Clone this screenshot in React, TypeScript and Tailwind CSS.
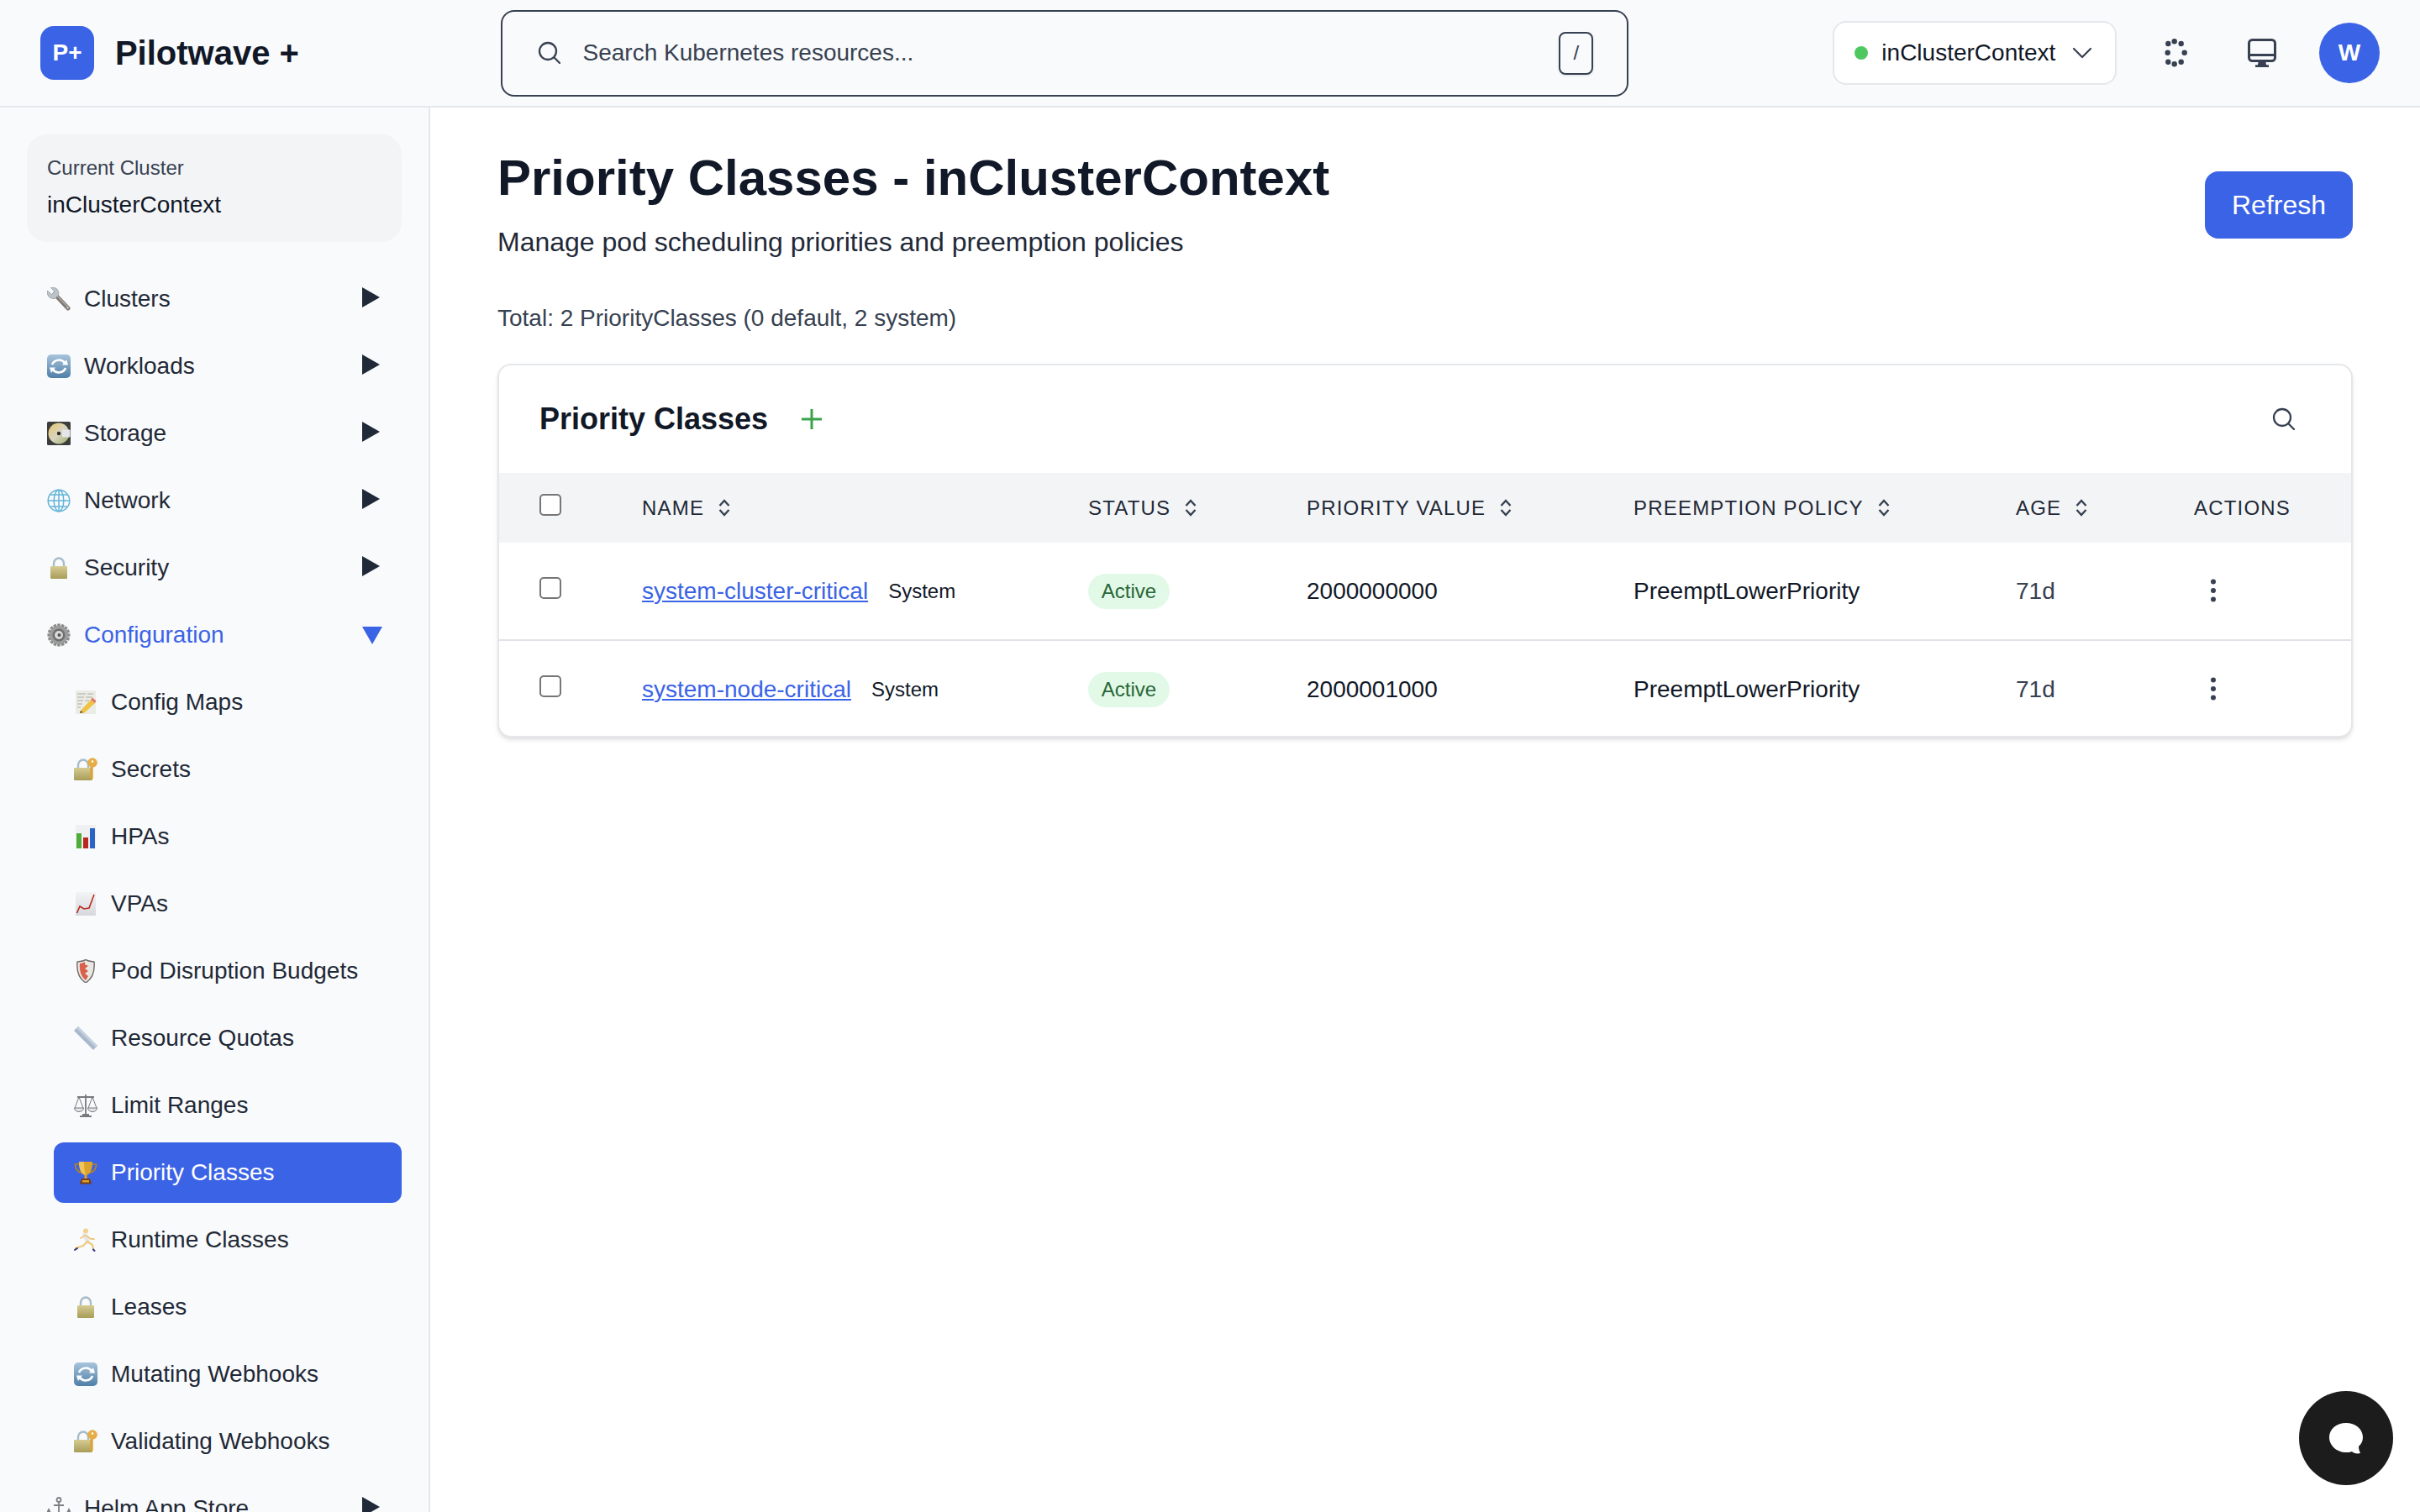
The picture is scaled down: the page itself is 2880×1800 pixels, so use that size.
import React from 'react';
import { MoreVertical } from 'lucide-react';

const Wrench = () => (
  <svg viewBox="0 0 28 28" className="w-full h-full">
    <path d="M25 25 L9 8" stroke="#7d7772" strokeWidth="5" strokeLinecap="round" />
    <path d="M25.500 24.500 L12 10" stroke="#b0aaa4" strokeWidth="1.500" />
    <path d="M0.500 4 L5.500 8.500 L9 5.500 L4.500 0.500 A7 7 0 0 1 13.500 9.500 L9.500 13.500 A7.500 7.500 0 0 1 0.500 4Z" fill="#bcc3c9" stroke="#8b9299" strokeWidth="0.6" />
    <circle cx="24.500" cy="24.500" r="1" fill="#e8e6e3" />
  </svg>
);
const Refresh = () => (
  <svg viewBox="0 0 28 28" className="w-full h-full">
    <defs>
      <linearGradient id="rf" x1="0" y1="0" x2="0" y2="1">
        <stop offset="0" stopColor="#a9c4dc" />
        <stop offset="1" stopColor="#4f7fa8" />
      </linearGradient>
    </defs>
    <rect x="0" y="0" width="28" height="28" rx="5" fill="url(#rf)" />
    <path d="M6 12 A8.5 8 0 0 1 21 10" fill="none" stroke="#fff" strokeWidth="2.6" />
    <path d="M18 12.5 L25 12.5 L23 6 Z" fill="#fff" />
    <path d="M22 16 A8.5 8 0 0 1 7 18" fill="none" stroke="#fff" strokeWidth="2.6" />
    <path d="M10 15.5 L3 15.5 L5 22 Z" fill="#fff" />
  </svg>
);
const Disc = () => (
  <svg viewBox="0 0 28 28" className="w-full h-full">
    <defs>
      <linearGradient id="dc" x1="0" y1="0" x2="1" y2="1">
        <stop offset="0" stopColor="#e8c766" />
        <stop offset="0.5" stopColor="#d9d4c0" />
        <stop offset="1" stopColor="#9bb06a" />
      </linearGradient>
    </defs>
    <rect width="28" height="28" rx="1.5" fill="#3d3d3b" />
    <circle cx="14" cy="14" r="12.5" fill="url(#dc)" />
    <rect x="18" y="9.5" width="9.5" height="9" rx="1" fill="#e4e6e8" />
    <circle cx="14" cy="14" r="2.2" fill="#2c2c2c" />
  </svg>
);
const Globe = () => (
  <svg viewBox="0 0 28 28" className="w-full h-full" fill="none" stroke="#62b4d8" strokeWidth="1.5">
    <circle cx="14" cy="14" r="12.8" />
    <ellipse cx="14" cy="14" rx="5.8" ry="12.8" />
    <path d="M14 1V27M1.5 14H26.5M3.5 7H24.500M3.5 21H24.5" />
  </svg>
);
const LockBody = ({ x = 4, w = 20 }: { x?: number; w?: number }) => (
  <>
    <defs>
      <linearGradient id="lk" x1="0" y1="0" x2="0" y2="1">
        <stop offset="0" stopColor="#d6cc92" />
        <stop offset="1" stopColor="#a89c58" />
      </linearGradient>
    </defs>
    <rect x={x} y="12" width={w} height="15" rx="1.2" fill="url(#lk)" />
  </>
);
const Lock = () => (
  <svg viewBox="0 0 28 28" className="w-full h-full">
    <path d="M8 13V9A6 6.500 0 0 1 20 9V13" fill="none" stroke="#a9bccb" strokeWidth="2.4" />
    <LockBody />
  </svg>
);
const LockKey = () => (
  <svg viewBox="0 0 28 28" className="w-full h-full">
    <path d="M5 13V9A6 6.500 0 0 1 17 9V13" fill="none" stroke="#a9bccb" strokeWidth="2.4" />
    <LockBody x={0} w={22} />
    <path d="M21 8V25" stroke="#dca23c" strokeWidth="3.4" />
    <circle cx="22" cy="6" r="5.800" fill="#e5ad45" />
    <circle cx="22" cy="4.500" r="1.500" fill="#fbeec9" />
  </svg>
);
const Gear = () => (
  <svg viewBox="0 0 28 28" className="w-full h-full">
    <g stroke="#8a8a8a" strokeWidth="3.6">
      <path d="M14 0.500V27.500M0.500 14H27.500M4.500 4.500L23.500 23.500M23.500 4.500L4.500 23.500M8.800 1.500L19.200 26.500M19.200 1.500L8.800 26.500M1.500 8.800L26.500 19.200M1.500 19.200L26.500 8.800" />
    </g>
    <circle cx="14" cy="14" r="11" fill="#9c9c9c" />
    <circle cx="14" cy="14" r="7.500" fill="#6e6e6e" />
    <circle cx="14" cy="14" r="5" fill="#d8d8d8" />
    <circle cx="14.500" cy="14" r="2" fill="#555" />
  </svg>
);
const Memo = () => (
  <svg viewBox="0 0 28 28" className="w-full h-full">
    <rect x="2" y="0" width="24" height="28" fill="#ecece6" />
    <path d="M4 4H14M16 4H23M4 8H12M14 8H22M4 12H11M13 12H18M4 16H10M4 20H8" stroke="#a5a59c" strokeWidth="0.9" />
    <path d="M8 24 L20 11 L25 15 L12 27 L7 27 Z" fill="#f0c243" />
    <path d="M20 11 L22 8.500 L26.500 12.500 L25 15Z" fill="#e0766c" />
    <path d="M7 27 L8 24 L10.500 26Z" fill="#444" />
  </svg>
);
const Bars = () => (
  <svg viewBox="0 0 28 28" className="w-full h-full">
    <rect x="2" y="0" width="24" height="28" fill="#eef0f2" />
    <rect x="3" y="10" width="6" height="18" fill="#4ead3a" />
    <rect x="11" y="15" width="6" height="13" fill="#b8281e" />
    <rect x="19" y="4" width="6" height="24" fill="#2b63c6" />
  </svg>
);
const Line = () => (
  <svg viewBox="0 0 28 28" className="w-full h-full">
    <defs>
      <linearGradient id="ln" x1="0" y1="0" x2="0" y2="1">
        <stop offset="0" stopColor="#f3f4f5" />
        <stop offset="1" stopColor="#d5d8dc" />
      </linearGradient>
    </defs>
    <rect x="2" y="0" width="24" height="28" fill="url(#ln)" />
    <path d="M3.500 25 L7 17 L12 20 L18 19 L24 3" fill="none" stroke="#bb2a1e" strokeWidth="1.600" />
  </svg>
);
const Shield = () => (
  <svg viewBox="0 0 28 28" className="w-full h-full">
    <path d="M14 0.500 C18 2.500 21 2.500 24 3 C25 14 22 23 14 28 C6 23 3 14 4 3 C7 2.500 10 2.500 14 0.500Z" fill="#e9e7e4" stroke="#6e6a66" strokeWidth="1.400" />
    <path d="M7 5 C9 5 11 4 13 3 L13 6 L17 8 L13 11 L17 14 L13 17 L17 20 L14 25 C9 21 6 14 7 5Z" fill="#d9604a" />
  </svg>
);
const Ruler = () => (
  <svg viewBox="0 0 28 28" className="w-full h-full">
    <path d="M5 0 L28 23 L23 28 L0 5 Z" fill="#a9b9cd" />
    <path d="M5 0 L28 23 L26 25 L3 2 Z" fill="#c4d0de" />
  </svg>
);
const Scales = () => (
  <svg viewBox="0 0 28 28" className="w-full h-full" fill="none" stroke="#77797c" strokeWidth="1">
    <path d="M14 1V25M4 4H24M7 27H21M10 25H18" strokeWidth="1.800" />
    <path d="M6 4L1 17M6 4L11 17M22 4L17 17M22 4L27 17" />
    <path d="M0.500 17A5.500 4.500 0 0 0 11.500 17ZM16.500 17A5.500 4.500 0 0 0 27.500 17Z" fill="#e3e5e8" />
  </svg>
);
const Trophy = () => (
  <svg viewBox="0 0 28 28" className="w-full h-full">
    <path d="M7 4H1.500C1.500 10 4 13 9 14M21 4H26.500C26.500 10 24 13 19 14" fill="none" stroke="#b9821f" strokeWidth="1.700" />
    <path d="M6 1H22C22 10 20 15 15.500 17V21H12.500V17C8 15 6 10 6 1Z" fill="#dca32c" />
    <path d="M6 1H12C12 9 13 14 14 17C9 15 6 10 6 1Z" fill="#f0c65a" />
    <path d="M9 21H19L21 27.500H7Z" fill="#7c3c12" />
    <rect x="10" y="23" width="8" height="2.500" fill="#dca32c" />
  </svg>
);
const Runner = () => (
  <svg viewBox="0 0 28 28" className="w-full h-full" fill="none" strokeLinecap="round" strokeLinejoin="round">
    <circle cx="14" cy="3.500" r="3" fill="#f3d18b" />
    <path d="M13 8 L16 15" stroke="#e3e5ea" strokeWidth="5" />
    <path d="M13 9 L8 12 M15 9 L20 13 L24 13" stroke="#f0c87e" strokeWidth="1.800" />
    <path d="M16 16 L11 21 L2 24" stroke="#f0c87e" strokeWidth="2.200" />
    <path d="M16 16 L22 20 L23 25" stroke="#f0c87e" strokeWidth="2.200" />
    <path d="M1 26 L4 24" stroke="#2b3a7a" strokeWidth="2" />
    <path d="M23 25.500 L24.500 27" stroke="#2b3a7a" strokeWidth="2" />
  </svg>
);
const Anchor = () => (
  <svg viewBox="0 0 28 28" className="w-full h-full" fill="none" stroke="#7b8087" strokeWidth="1.800">
    <circle cx="14" cy="3.500" r="2.500" />
    <path d="M14 6V27M8 10H20M2 17C2 23 8 26 14 27C20 26 26 23 26 17" />
    <path d="M0 19L2 15L4 19M24 19L26 15L28 19" />
  </svg>
);

const Sort = () => (
  <svg viewBox="0 0 14 21" className="w-[14px] h-[21px] ml-[17px]" fill="none" stroke="#374151" strokeWidth="2.400">
    <path d="M1.500 8L7 2L12.500 8M1.500 13L7 19L12.500 13" />
  </svg>
);

const TriRight = () => (
  <svg viewBox="0 0 21 24" className="w-[21px] h-6 mb-1">
    <path d="M0 0L21 12L0 24Z" fill="#1f2937" />
  </svg>
);
const TriDown = () => (
  <svg viewBox="0 0 24 21" className="w-6 h-[21px] mr-[-3px]">
    <path d="M0 0H24L12 21Z" fill="#3b63e6" />
  </svg>
);

const Mag = ({ className }: { className: string }) => (
  <svg viewBox="0 0 24 24" className={className} fill="none" stroke="#374151" strokeWidth="1.700" strokeLinecap="round" strokeLinejoin="round">
    <path d="m21 21-5.197-5.197m0 0A7.5 7.5 0 1 0 5.196 5.196a7.5 7.5 0 0 0 10.607 10.607Z" />
  </svg>
);

const spinnerDots: [number, number][] = [
  [13.7, 4.3],
  [21.7, 7],
  [25.7, 17.7],
  [21.7, 28.7],
  [13.7, 31.3],
  [6.3, 28.7],
  [5.7, 17.7],
  [6.3, 7],
];

const Spinner = () => (
  <svg viewBox="0 0 32 36" className="w-8 h-9">
    {spinnerDots.map(([x, y]) => (
      <circle key={`${x}-${y}`} cx={x} cy={y} r="3.2" fill="#374151" />
    ))}
  </svg>
);

const Monitor = () => (
  <svg viewBox="0 0 34 34" className="w-[34px] h-[34px]" fill="none" stroke="#374151" strokeWidth="3">
    <rect x="1.500" y="1.500" width="31" height="25" rx="4" />
    <path d="M2 19.500H32" />
    <path d="M13.500 27H20.500L21.500 32.500H12.500Z" fill="#374151" strokeWidth="1.500" />
    <path d="M9 32.800H25" />
  </svg>
);

type Item = { icon: React.FC; label: string; sub?: boolean; active?: boolean; open?: boolean };

const items: Item[] = [
  { icon: Wrench, label: 'Clusters' },
  { icon: Refresh, label: 'Workloads' },
  { icon: Disc, label: 'Storage' },
  { icon: Globe, label: 'Network' },
  { icon: Lock, label: 'Security' },
  { icon: Gear, label: 'Configuration', open: true },
  { icon: Memo, label: 'Config Maps', sub: true },
  { icon: LockKey, label: 'Secrets', sub: true },
  { icon: Bars, label: 'HPAs', sub: true },
  { icon: Line, label: 'VPAs', sub: true },
  { icon: Shield, label: 'Pod Disruption Budgets', sub: true },
  { icon: Ruler, label: 'Resource Quotas', sub: true },
  { icon: Scales, label: 'Limit Ranges', sub: true },
  { icon: Trophy, label: 'Priority Classes', sub: true, active: true },
  { icon: Runner, label: 'Runtime Classes', sub: true },
  { icon: Lock, label: 'Leases', sub: true },
  { icon: Refresh, label: 'Mutating Webhooks', sub: true },
  { icon: LockKey, label: 'Validating Webhooks', sub: true },
  { icon: Anchor, label: 'Helm App Store' },
];

const NavRow = ({ item }: { item: Item }) => {
  const Icon = item.icon;
  return (
    <div
      className={`flex items-center h-[72px] mb-2 shrink-0 rounded-xl pl-6 pr-[26px] text-[28px] ${item.sub ? 'ml-8' : ''} ${
        item.active ? 'bg-[#3b63e6] text-white' : item.open ? 'text-[#3b63e6]' : 'text-[#1f2937]'
      }`}
    >
      <span className="w-7 h-7 mr-4 shrink-0">
        <Icon />
      </span>
      <span className="flex-1">{item.label}</span>
      {!item.sub && (item.open ? <TriDown /> : <TriRight />)}
    </div>
  );
};

const cols = 'grid grid-cols-[170px_531px_260px_389px_455px_212px_1fr] items-center';

const Check = () => (
  <span className="block w-[26px] h-[26px] ml-12 mb-2 rounded-[5px] border-2 border-[#767676] bg-white" />
);

const headers: [string, boolean][] = [
  ['NAME', true],
  ['STATUS', true],
  ['PRIORITY VALUE', true],
  ['PREEMPTION POLICY', true],
  ['AGE', true],
  ['ACTIONS', false],
];

const rows = [
  { name: 'system-cluster-critical', value: '2000000000' },
  { name: 'system-node-critical', value: '2000001000' },
];

export default function App() {
  return (
    <div className="h-[1800px] w-[2880px] overflow-hidden flex flex-col bg-white font-['Liberation_Sans',Arial,sans-serif] text-[#111827]">
      <header className="h-[128px] shrink-0 flex items-center bg-[#f9fafb] border-b-2 border-[#e5e7eb] pl-12 pr-12">
        <div className="w-16 h-16 rounded-2xl bg-[#3b63e6] text-white font-bold text-[28px] flex items-center justify-center">P+</div>
        <div className="ml-[25px] text-[40px] font-bold w-[459px]">Pilotwave +</div>
        <div className="h-[103px] w-[1344px] rounded-2xl border-2 border-[#374151] flex items-center pl-10 pr-10 text-[28px] text-[#374151]">
          <Mag className="w-8 h-8 mr-6" />
          <span className="flex-1">Search Kubernetes resources...</span>
          <span className="w-[41px] h-[51px] rounded-lg border-2 border-[#374151] flex items-center justify-center text-[24px] shadow-sm">/</span>
        </div>
        <div className="ml-[243px] w-[338px] h-[76px] rounded-2xl border-2 border-[#e5e7eb] bg-white flex items-center pl-6 text-[28px] text-[#111827]">
          <span className="w-4 h-4 rounded-full bg-[#4fc860] mr-4" />
          <span>inClusterContext</span>
          <svg viewBox="0 0 24 24" className="w-8 h-8 ml-4" fill="none" stroke="#374151" strokeWidth="1.700" strokeLinecap="round" strokeLinejoin="round">
            <path d="m19.500 8.250-7.500 7.500-7.500-7.500" />
          </svg>
        </div>
        <div className="ml-[55px] flex items-center justify-center w-8">
          <Spinner />
        </div>
        <div className="ml-[69px] flex items-center justify-center w-[34px]">
          <Monitor />
        </div>
        <div className="ml-[51px] w-[72px] h-[72px] rounded-full bg-[#3b63e6] text-white font-bold text-[28px] flex items-center justify-center">W</div>
      </header>
      <div className="flex flex-1 min-h-0">
        <aside className="w-[512px] shrink-0 border-r-2 border-[#e5e7eb] bg-[#f9fafb] pt-8 pl-8 pr-8 overflow-hidden flex flex-col">
          <div className="h-[128px] shrink-0 rounded-3xl bg-[#f3f4f6] pl-6 pt-6 mb-8">
            <div className="text-[24px] leading-8 text-[#374151]">Current Cluster</div>
            <div className="text-[28px] leading-8 mt-3 text-[#111827]">inClusterContext</div>
          </div>
          {items.map((it) => (
            <NavRow key={it.label} item={it} />
          ))}
        </aside>
        <main className="flex-1 pl-20 pr-20 pt-8">
          <div className="flex justify-between">
            <div>
              <h1 className="text-[60px] leading-[72px] font-bold mt-4">Priority Classes - inClusterContext</h1>
              <p className="text-[32px] leading-[48px] mt-4 text-[#1f2937]">Manage pod scheduling priorities and preemption policies</p>
            </div>
            <button className="w-[176px] h-[80px] mt-[44px] rounded-2xl bg-[#3b63e6] text-white text-[32px]">Refresh</button>
          </div>
          <div className="text-[28px] leading-10 mt-[47px] text-[#374151]">Total: 2 PriorityClasses (0 default, 2 system)</div>
          <div className="mt-[34px] rounded-2xl border-2 border-[#e5e7eb] shadow-md bg-white overflow-hidden">
            <div className="h-[128px] flex items-center pl-12 pr-16">
              <h2 className="text-[36px] font-bold">Priority Classes</h2>
              <svg viewBox="0 0 24 24" className="w-6 h-6 ml-10" fill="none" stroke="#3aa24b" strokeWidth="3">
                <path d="M12 0V24M0 12H24" />
              </svg>
              <Mag className="w-8 h-8 ml-auto" />
            </div>
            <div className={`${cols} h-[83px] bg-[#f3f4f6] text-[24px] tracking-[1.2px] text-[#1f2937]`}>
              <Check />
              {headers.map(([h, s]) => (
                <div key={h} className="flex items-center">
                  <span>{h}</span>
                  {s && <Sort />}
                </div>
              ))}
            </div>
            {rows.map((r, i) => (
              <div key={r.name} className={`${cols} text-[28px] ${i === 0 ? 'h-[117px] border-b-2 border-[#e1e3e8]' : 'h-[113px] pt-[2px]'}`}>
                <Check />
                <div className="flex items-center">
                  <a className="text-[#3b63e6] underline">{r.name}</a>
                  <span className="ml-6 text-[24px] text-[#111827]">System</span>
                </div>
                <div>
                  <span className="inline-flex h-[42px] w-[97px] items-center justify-center rounded-full bg-[#e3f9e8] text-[24px] text-[#276738]">Active</span>
                </div>
                <div className="text-[#111827]">{r.value}</div>
                <div className="text-[#111827]">PreemptLowerPriority</div>
                <div className="text-[#374151]">71d</div>
                <div className="pl-[5px] mb-[2px]">
                  <MoreVertical className="w-9 h-9 text-[#374151]" strokeWidth={2} />
                </div>
              </div>
            ))}
          </div>
        </main>
      </div>
      <div className="fixed right-8 bottom-8 w-[112px] h-[112px] rounded-full bg-[#1c1c1c] flex items-center justify-center">
        <svg viewBox="0 0 40 37" className="w-10 h-[37px]">
          <path d="M20 0C31 0 40 7 40 17C40 22 38 25 35 28C35 31 36 34 37 36C33 37 29 36 27 34C25 35 22 35 20 35C9 35 0 27 0 17C0 7 9 0 20 0Z" fill="#fff" />
        </svg>
      </div>
    </div>
  );
}
